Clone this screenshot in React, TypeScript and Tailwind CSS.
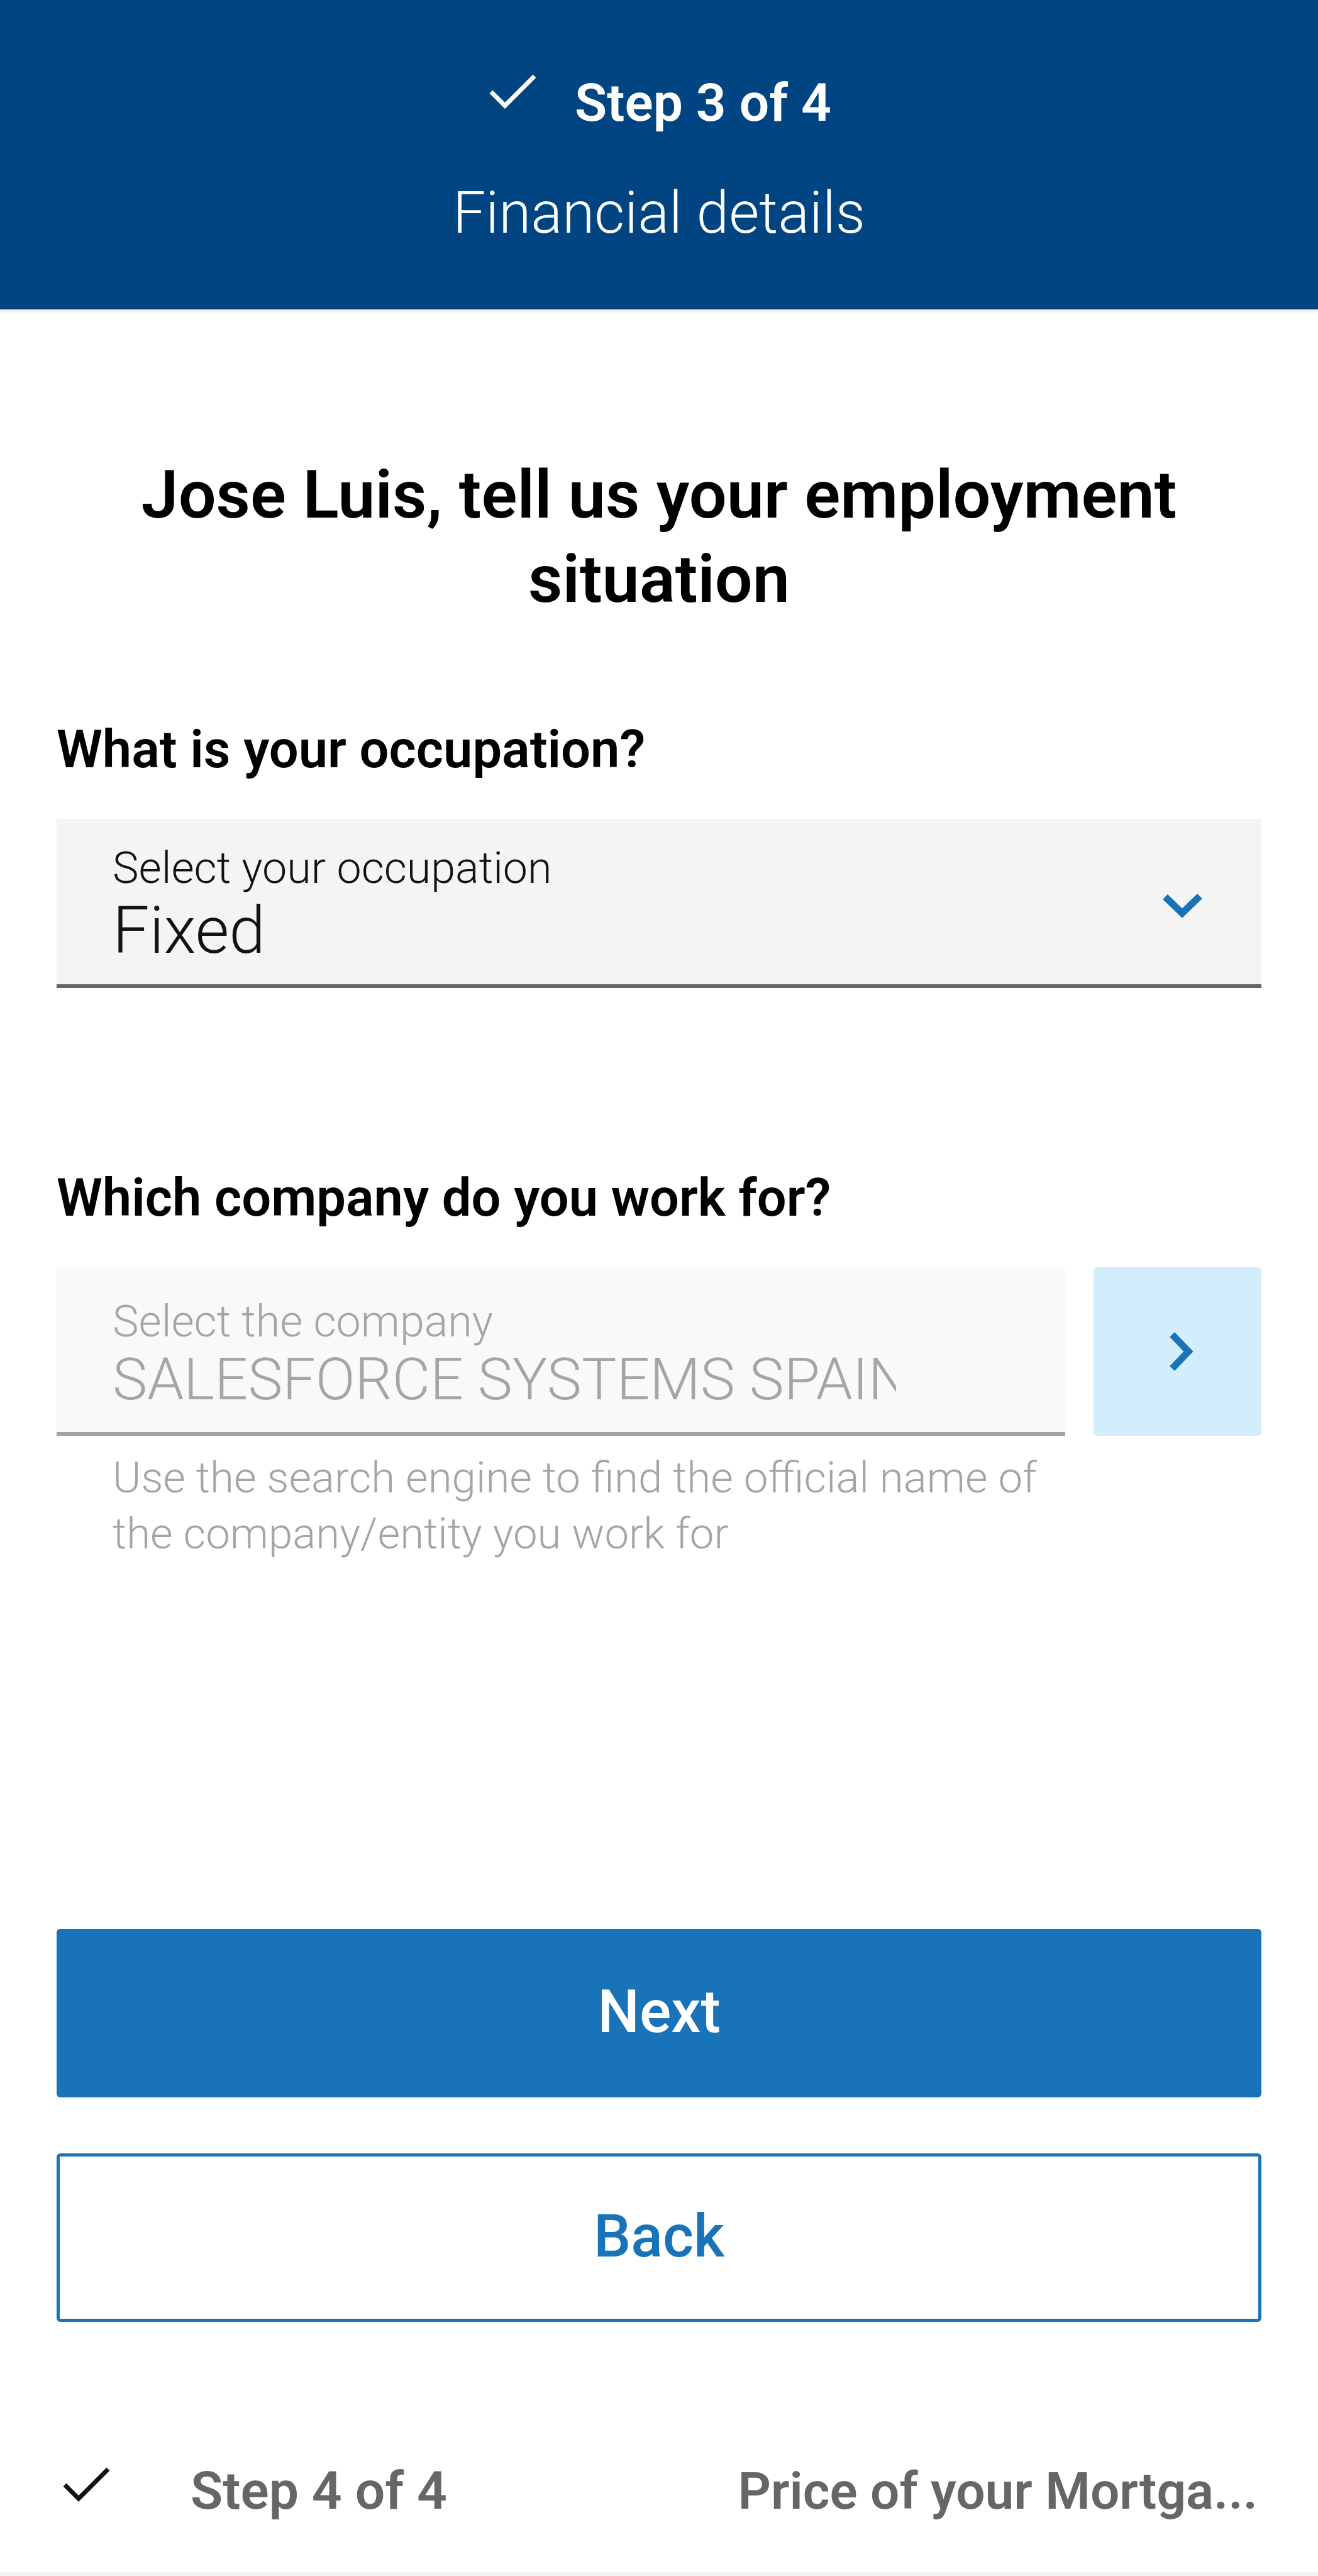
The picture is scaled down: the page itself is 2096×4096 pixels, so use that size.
import React, { useState } from "react";

function CheckIcon({ className }: { className?: string }) {
  return (
    <svg viewBox="0 0 76 56" className={className} fill="none" stroke="currentColor" strokeWidth="7" aria-hidden="true">
      <path d="M3 28 25 50 72 3" />
    </svg>
  );
}

function ChevronDown({ className }: { className?: string }) {
  return (
    <svg viewBox="0 0 64 40" className={className} fill="none" stroke="currentColor" strokeWidth="11" aria-hidden="true">
      <path d="M4 5 31 31 59 4" />
    </svg>
  );
}

function ChevronRight({ className }: { className?: string }) {
  return (
    <svg viewBox="0 0 40 62" className={className} fill="none" stroke="currentColor" strokeWidth="11" aria-hidden="true">
      <path d="M5 4 31 31 5 58" />
    </svg>
  );
}

function StepHeader() {
  return (
    <header className="flex flex-col items-center gap-[63px] border-b-[5px] border-[#f4f4f4] bg-[#004481] pt-[108px] pb-[97px] text-white">
      <div className="flex items-start gap-[60px] pl-1">
        <CheckIcon className="mt-[10px] h-14 w-[76px]" />
        <span className="text-[84px] leading-[112px] font-semibold">Step 3 of 4</span>
      </div>
      <p className="text-[93px] leading-[112px] font-light">Financial details</p>
    </header>
  );
}

function OccupationField() {
  const [value, setValue] = useState("Fixed");
  return (
    <section>
      <h2 className="mb-[54px] text-[83px] leading-[112px] font-semibold">What is your occupation?</h2>
      <div className="relative border-b-[6px] border-[#666666] bg-[#f4f4f4] pt-[34px] pb-[29px] pl-[89px] text-[#121212]">
        <label htmlFor="occupation" className="block text-[70px] leading-[88px] font-light">
          Select your occupation
        </label>
        <select
          id="occupation"
          value={value}
          onChange={(e) => setValue(e.target.value)}
          className="block h-28 w-full appearance-none bg-transparent text-[104px] leading-[112px] font-light outline-none"
        >
          <option>Fixed</option>
          <option>Temporary</option>
          <option>Self-employed</option>
        </select>
        <ChevronDown className="pointer-events-none absolute top-[119px] right-[93px] h-10 w-16 text-[#1973b8]" />
      </div>
    </section>
  );
}

function CompanyField() {
  return (
    <section>
      <h2 className="mb-[54px] text-[83px] leading-[112px] font-semibold">Which company do you work for?</h2>
      <div className="flex items-start gap-[45px]">
        <div className="min-w-0 flex-1 text-[#a5a5a5]">
          <div className="border-b-[6px] border-[#a3a3a3] bg-[#f9f9f9] pt-[42px] pr-[269px] pb-[34px] pl-[89px]">
            <label htmlFor="company" className="block text-[70px] leading-[88px] font-light">
              Select the company
            </label>
            <input
              id="company"
              type="text"
              disabled
              defaultValue="SALESFORCE SYSTEMS SPAIN"
              aria-describedby="company-help"
              className="block h-[98px] w-full bg-transparent text-[93px] leading-[98px] font-light outline-none"
            />
          </div>
          <p id="company-help" className="mt-[22px] pl-[89px] text-[69px] leading-[89px] font-light">
            Use the search engine to find the official name of the company/entity you work for
          </p>
        </div>
        <button
          type="button"
          aria-label="Search company"
          className="flex h-[268px] w-[267px] shrink-0 items-center justify-center rounded-md bg-[#d4edfc] pl-3 text-[#1973b8]"
        >
          <ChevronRight className="h-[62px] w-10" />
        </button>
      </div>
    </section>
  );
}

export default function App() {
  return (
    <div className="bg-white font-[Roboto,sans-serif] text-black">
      <StepHeader />
      <main className="px-[90px] pt-[223px]">
        <h1 className="mb-[148px] text-center text-[106px] leading-[134px] font-semibold">
          Jose Luis, tell us your employment situation
        </h1>
        <form className="flex flex-col" onSubmit={(e) => e.preventDefault()}>
          <div className="flex flex-col gap-[278px]">
            <OccupationField />
            <CompanyField />
          </div>
          <div className="mt-[584px] flex flex-col gap-[89px]">
            <button
              type="submit"
              className="h-[268px] w-full rounded-md bg-[#1973b8] pb-1 text-[94px] font-medium text-white"
            >
              Next
            </button>
            <button
              type="button"
              className="h-[268px] w-full rounded-md border-[5px] border-[#1973b8] pb-1 text-[94px] font-medium text-[#1973b8]"
            >
              Back
            </button>
          </div>
        </form>
      </main>
      <footer className="mt-[213px] flex items-start justify-between border-b-[6px] border-[#f4f4f4] pr-24 pb-[73px] pl-[100px] leading-[112px] font-semibold text-[#666666]">
        <div className="flex items-start gap-[127px]">
          <CheckIcon className="mt-[18px] h-14 w-[76px] text-[#121212]" />
          <span className="text-[84px]">Step 4 of 4</span>
        </div>
        <span className="text-[82px]">Price of your Mortga...</span>
      </footer>
    </div>
  );
}
